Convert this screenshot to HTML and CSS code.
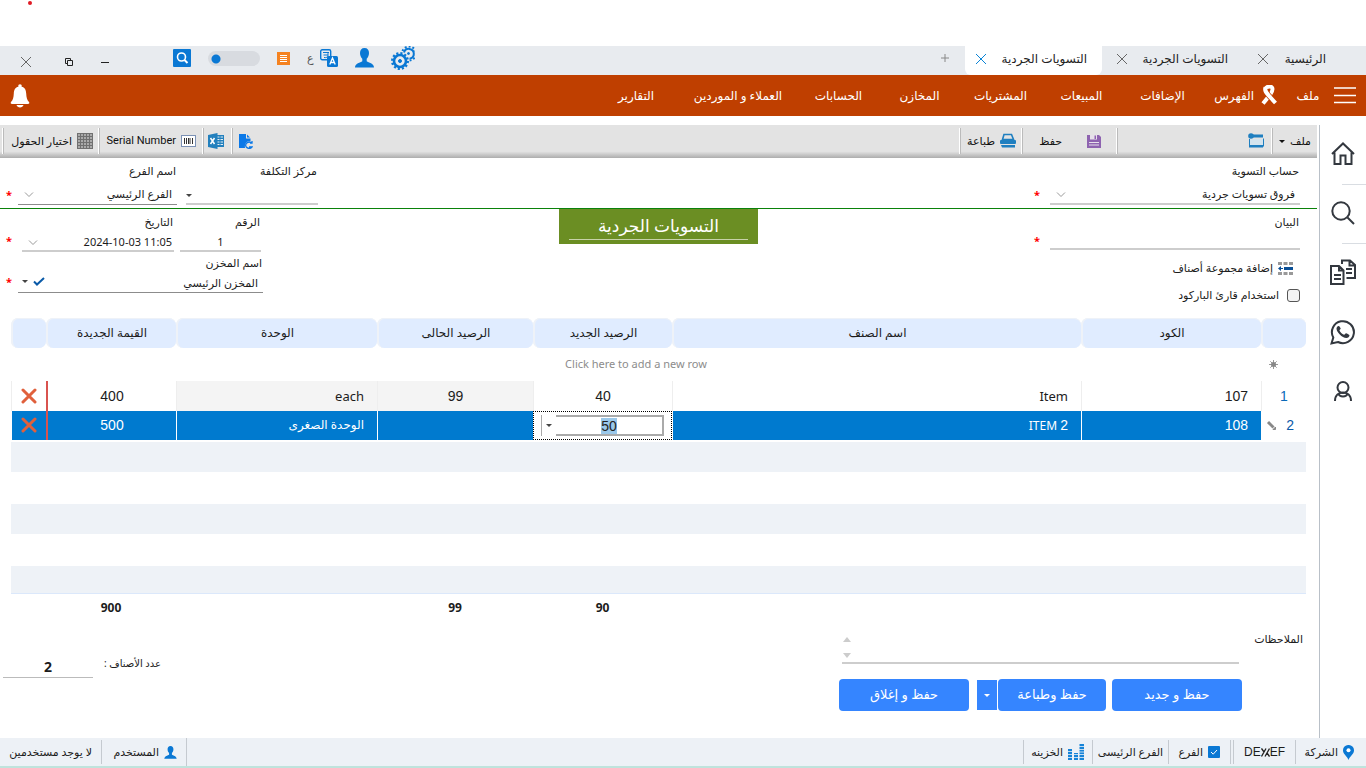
FILE: index.html
```html
<!DOCTYPE html>
<html lang="ar" dir="rtl">
<head>
<meta charset="utf-8">
<meta name="viewport" content="width=device-width, initial-scale=1">
<title>التسويات الجردية</title>
<link rel="stylesheet" href="styles.css">
</head>
<body>
<div class="app">
  <div class="top-space"><span class="rec-dot"></span></div>

  <header class="titlebar">
    <div class="tabs">
      <div class="tab tab-home"><span>الرئيسية</span><button class="tab-close" aria-label="إغلاق"><svg width="12" height="12" viewBox="0 0 12 12"><path d="M1 1l10 10M11 1L1 11"/></svg></button></div>
      <div class="tab"><span>التسويات الجردية</span><button class="tab-close" aria-label="إغلاق"><svg width="12" height="12" viewBox="0 0 12 12"><path d="M1 1l10 10M11 1L1 11"/></svg></button></div>
      <div class="tab tab-active"><span>التسويات الجردية</span><button class="tab-close" aria-label="إغلاق"><svg width="12" height="12" viewBox="0 0 12 12"><path d="M1 1l10 10M11 1L1 11"/></svg></button></div>
      <button class="tab-add" aria-label="تبويب جديد"><svg width="8" height="8" viewBox="0 0 8 8"><path d="M4 0v8M0 4h8"/></svg></button>
    </div>
    <div class="window-tools" dir="ltr">
      <button class="win-btn" aria-label="إغلاق النافذة"><svg width="12" height="12" viewBox="0 0 12 12"><path d="M1 1l10 10M11 1L1 11" stroke="#666" fill="none"/></svg></button>
      <button class="win-btn win-restore" aria-label="استعادة"><svg width="10" height="10" viewBox="0 0 10 10"><path d="M3.500 3.500h5v5h-5zM3.500 6.500h-2v-5h5v2" stroke="#222" fill="none"/></svg></button>
      <button class="win-btn win-min" aria-label="تصغير"><svg width="10" height="10" viewBox="0 0 10 10"><path d="M1 5.500h8" stroke="#222" fill="none"/></svg></button>
      <div class="quick">
        <button aria-label="بحث"><svg width="18" height="18" viewBox="0 0 18 18"><rect width="18" height="18" rx="1" fill="#0a78d4"/><circle cx="8.500" cy="8" r="4" fill="none" stroke="#fff" stroke-width="1.600"/><path d="M11.500 11l3 3" stroke="#fff" stroke-width="2"/></svg></button>
        <input class="toggle" type="checkbox" aria-label="الوضع">
        <button aria-label="قائمة"><svg width="13" height="13" viewBox="0 0 13 13"><rect width="13" height="13" fill="#f58220"/><path d="M3 3.500h7M3 5.500h7M3 7.500h7M3 9.500h7" stroke="#fff"/></svg></button>
        <button class="lang" aria-label="اللغة"><span>ع</span><svg width="18" height="18" viewBox="0 0 18 18"><rect x=".7" y=".7" width="10" height="10" rx="1.500" fill="#e8ebef" stroke="#0a78d4" stroke-width="1.400"/><path d="M3 3.500h6M3.500 6h4.500M8 4v3c0 1-2 2-4 1.500" stroke="#0a78d4" fill="none"/><rect x="7" y="7" width="11" height="11" rx="1.500" fill="#0a78d4"/><path d="M9.800 15.500l2.700-6.500 2.700 6.500M10.800 13.500h3.500" stroke="#fff" stroke-width="1.300" fill="none"/></svg></button>
        <button aria-label="المستخدم"><svg width="19" height="20" viewBox="0 0 19 20"><path d="M9.500 0C6.500 0 5 2 5 5c0 2.500 1 4.500 2.300 5.800v2.500C5.500 14.500 0 15.500 0 19.500h19c0-4-5.500-5-7.300-6.200v-2.500C13 9.500 14 7.500 14 5c0-3-1.500-5-4.500-5z" fill="#0a78d4"/></svg></button>
        <button aria-label="الإعدادات"><svg width="24" height="24" viewBox="0 0 24 24" fill="none" stroke="#0a78d4"><circle cx="9" cy="15" r="6" stroke-width="2.600"/><circle cx="9" cy="15" r="7.800" stroke-width="2.400" stroke-dasharray="2.100 2"/><circle cx="9" cy="15" r="1.500" fill="#0a78d4"/><path d="M13 6.500a5 5 0 1 1 5.500 6.300" stroke-width="2"/><path d="M11.500 5a7 7 0 1 1 7 9.500" stroke-width="2" stroke-dasharray="1.900 2"/><circle cx="17.500" cy="7.500" r="1" fill="#0a78d4"/></svg></button>
      </div>
    </div>
  </header>

  <nav class="menubar">
    <button class="burger" aria-label="القائمة"><svg width="22" height="17" viewBox="0 0 22 17"><path d="M0 1h22M0 8.500h22M0 15.500h22" stroke="#fff" stroke-width="1.700"/></svg></button>
    <a href="#">ملف</a>
    <a href="#" class="index-link"><svg width="18" height="21" viewBox="0 0 18 21"><path d="M5.500 4.500C6 1.500 9 1 11.500 2c2 1.500.5 5-1.500 8L3 18.500" fill="none" stroke="#fff" stroke-width="4"/><path d="M6 3.500c-1 3 1.500 5.500 4.500 9l4.500 5" fill="none" stroke="#bf3f00" stroke-width="5.500"/><path d="M5.500 2.500c-1.500 4 2 6.500 5 10l5 5.500" fill="none" stroke="#fff" stroke-width="4"/></svg><span>الفهرس</span></a>
    <a href="#">الإضافات</a>
    <a href="#">المبيعات</a>
    <a href="#">المشتريات</a>
    <a href="#">المخازن</a>
    <a href="#">الحسابات</a>
    <a href="#">العملاء و الموردين</a>
    <a href="#">التقارير</a>
    <button class="bell" aria-label="التنبيهات"><svg width="20" height="24" viewBox="0 0 20 24" fill="#fff"><circle cx="10" cy="2" r="1.800"/><path d="M10 2.500c-4.500 0-6 3-6.200 7-.2 4-.8 6.500-2.800 8.500-.8 1.200 0 2 1 2h16c1 0 1.800-.8 1-2-2-2-2.600-4.500-2.800-8.500-.2-4-1.700-7-6.200-7z"/><path d="M6.500 21h7c-.5 1.600-1.800 2.500-3.500 2.500S7 22.600 6.500 21z"/></svg></button>
  </nav>

  <div class="workspace">
    <aside class="sidebar">
      <button aria-label="الرئيسية"><svg width="24" height="24" viewBox="0 0 24 24"><path d="M1 12L12 1.500 23 12M3.500 10.500V22h6v-8.500h5V22h6V10.500"/></svg></button>
      <button class="ruled" aria-label="بحث"><svg width="24" height="24" viewBox="0 0 24 24"><circle cx="10" cy="10" r="8.700"/><path d="M16.500 16.500L23 23"/></svg></button>
      <button class="ruled" aria-label="مستندات"><svg width="26" height="26" viewBox="0 0 26 26"><path d="M1 7h8l4.500 4.500V25H1zM9 7v4.500h4.500M4 16h7M4 20h7M12 5V1.500h8L25 6v13h-8.500M19.500 2v4.500H25M16 10h6M16 14h6"/></svg></button>
      <button class="low" aria-label="واتساب"><svg width="26" height="26" viewBox="0 0 26 26"><path d="M1.500 24.500l1.800-6A11 11 0 1 1 8 23z"/><path class="solid" d="M9 7c-1-.5-2.500 1-2.500 2.500C6.500 13 12 19 16.500 19c1.500 0 3-1.300 3-2.700 0-.5-3-2-3.500-2-.7 0-1.300 1.700-2 1.500-2-.7-3.800-2.600-4.500-4.300-.2-.6 1.300-1.300 1.200-2C10.600 9 9.500 7.200 9 7z"/></svg></button>
      <button class="low" aria-label="الحساب"><svg width="20" height="22" viewBox="0 0 20 22"><circle cx="10" cy="7.500" r="5.500"/><path d="M2 21c0-6 4-8.500 8-8.500s8 2.500 8 8.500M5.500 13.500c1 4 8 4 9 0"/></svg></button>
    </aside>

    <main class="content">
      <div class="toolbar">
        <button class="tool tool-file">ملف <i class="caret"></i></button>
        <div class="tool-slot"><button class="tool" aria-label="نافذة"><svg width="16" height="16" viewBox="0 0 16 16"><path d="M5 1.500h10v3H5zM1 6h1v7.500H1zM15 5.500h1v8h-1zM1 12h14v2.500H1z" fill="#1f7fc0"/><path d="M2 6h13v6H2z" fill="#d4e4ee"/><circle cx="3" cy="3" r="2.800" fill="#1f7fc0"/></svg></button></div>
        <button class="tool tool-save"><svg width="14" height="15" viewBox="0 0 14 15"><path d="M0 1h12l2 2v11H0z" fill="#8e63b0"/><path d="M3 1h7v4.500H3zM2 8h10v1H2zM2 10.500h10v1H2z" fill="#e6e0ea"/><path d="M7.500 1.500h1.500V5H7.500z" fill="#8e63b0"/></svg><span>حفظ</span></button>
        <button class="tool tool-print"><svg width="16" height="16" viewBox="0 0 16 16"><path d="M4 1.500h7.500l2 5h-11z" fill="#e3e3e3" stroke="#1f7fc0" stroke-width="1.600"/><rect y="7" width="16" height="4" rx="1" fill="#1f7fc0"/><path d="M1 12h14v2.500H2z" fill="#1f7fc0"/></svg><span>طباعة</span></button>
        <div class="tool-fill"></div>
        <button class="tool tool-icon" aria-label="تحديث"><svg width="14" height="15" viewBox="0 0 14 15"><path d="M0 0h7v4.500h4.500V7C7 7 5.500 10 6 14H0z" fill="#0a78e8"/><path d="M8 .5L11 3.500H8z" fill="#0a78e8"/><path d="M12.500 9A3.500 3 0 1 0 13 13h-3M11 9h2V7" fill="none" stroke="#0a78e8" stroke-width="1.300"/></svg></button>
        <button class="tool tool-icon" aria-label="Excel"><svg width="16" height="16" viewBox="0 0 16 16"><rect x="8" y="2" width="8" height="12" fill="#2380bd"/><path d="M9 4h6M9 6.500h6M9 9h6M9 11.500h6" stroke="#e4eef5" stroke-width="1.200"/><path d="M12 2v12" stroke="#2380bd"/><path d="M0 2l9.500-2v16L0 14z" fill="#2380bd"/><path d="M2.500 5l4 6M6.500 5l-4 6" stroke="#fff" stroke-width="1.500"/></svg></button>
        <button class="tool tool-serial"><svg width="15" height="12" viewBox="0 0 15 12"><rect x=".5" y=".5" width="14" height="11" fill="#fff" stroke="#7b91b5"/><path d="M3.500 3v6M5.500 3v6M7.500 3v6M9 3v6M11.500 3v6" stroke="#333"/></svg><span dir="ltr">Serial Number</span></button>
        <button class="tool tool-fields"><svg width="16" height="16" viewBox="0 0 16 16"><rect width="16" height="16" fill="#aaa"/><path d="M.5 0v16M3.500 0v16M6.500 0v16M9.500 0v16M12.500 0v16M15.500 0v16M0 .5h16M0 3.500h16M0 6.500h16M0 9.500h16M0 12.500h16M0 15.500h16" stroke="#707070"/></svg><span>اختيار الحقول</span></button>
      </div>

      <section class="form-top">
        <div class="field-wrap">
          <div class="field field-wide"><label for="acc">حساب التسوية</label><div class="control"><select id="acc"><option>فروق تسويات جردية</option></select><svg class="chev" width="10" height="6" viewBox="0 0 10 6"><path d="M1 .5l4 4 4-4"/></svg></div></div>
          <span class="req">*</span>
        </div>
        <div class="field-wrap">
          <div class="field field-cost"><label for="cost">مركز التكلفة</label><div class="control"><select id="cost"><option></option></select><i class="caret chev"></i></div></div>
          <div class="field field-branch"><label for="branch">اسم الفرع</label><div class="control dark"><select id="branch"><option>الفرع الرئيسي</option></select><svg class="chev" width="10" height="6" viewBox="0 0 10 6"><path d="M1 .5l4 4 4-4"/></svg></div></div>
          <span class="req">*</span>
        </div>
      </section>

      <section class="form-body">
        <div class="side-right">
          <div class="field-wrap">
            <div class="field field-wide"><label for="desc">البيان</label><div class="control"><input id="desc" type="text"></div></div>
            <span class="req">*</span>
          </div>
          <button class="add-group"><svg width="15" height="13" viewBox="0 0 15 13"><path d="M0 1.500h4M5.500 1.500h4M11 1.500h4M0 11.500h4M5.500 11.500h4M11 11.500h4" stroke="#999" stroke-width="3"/><path d="M6 6.500h9" stroke="#0a4f96" stroke-width="3"/><path d="M0 6.500l3-2.500v2h2v1H3v2z" fill="#0a4f96"/></svg><span>إضافة مجموعة أصناف</span></button>
          <label class="barcode"><input type="checkbox"><span>استخدام قارئ الباركود</span></label>
        </div>
        <h1 class="form-title"><span>التسويات الجردية</span></h1>
        <div class="side-left">
          <div class="field-wrap">
            <div class="field field-number"><label for="num">الرقم</label><div class="control"><input id="num" type="text" value="1"></div></div>
            <div class="field field-date"><label for="date">التاريخ</label><div class="control"><input id="date" type="text" dir="ltr" value="2024-10-03 11:05"><svg class="chev" width="10" height="6" viewBox="0 0 10 6"><path d="M1 .5l4 4 4-4"/></svg></div></div>
            <span class="req">*</span>
          </div>
          <div class="field-wrap store-row">
            <div class="field field-store"><label for="store">اسم المخزن</label><div class="control dark"><select id="store"><option>المخزن الرئيسي</option></select><span class="chev store-marks"><svg width="12" height="9" viewBox="0 0 12 9"><path d="M1 4.500l3 3L11 1" fill="none" stroke="#0a5aa8" stroke-width="2"/></svg><i class="caret"></i></span></div></div>
            <span class="req">*</span>
          </div>
        </div>
      </section>

      <section class="grid-area">
        <table class="items">
          <colgroup><col class="c-no"><col class="c-code"><col><col class="c-new"><col class="c-now"><col class="c-unit"><col class="c-value"><col class="c-del"></colgroup>
          <thead><tr><th></th><th>الكود</th><th>اسم الصنف</th><th>الرصيد الجديد</th><th>الرصيد الحالى</th><th>الوحدة</th><th>القيمة الجديدة</th><th></th></tr></thead>
          <tbody>
            <tr class="new-row"><td class="star"><svg width="9" height="9" viewBox="0 0 9 9"><path d="M4.500 0v9M0 4.500h9M1.300 1.300l6.400 6.400M7.700 1.300L1.300 7.700" stroke="#999"/><circle cx="4.500" cy="4.500" r="2.500" fill="#888"/></svg></td><td colspan="7" dir="ltr" class="hint">Click here to add a new row</td></tr>
            <tr class="row"><td class="no">1</td><td class="end num">107</td><td class="end">Item</td><td class="num">40</td><td class="num muted">99</td><td class="end muted">each</td><td class="num value">400</td><td class="del"><button aria-label="حذف"><svg width="16" height="16" viewBox="0 0 16 16"><path d="M2 2l12 12M14 2L2 14"/></svg></button></td></tr>
            <tr class="row selected"><td class="no"><span class="row-no"><span>2</span><svg width="10" height="10" viewBox="0 0 10 10"><path d="M2 2l5.500 5.500" stroke="#888" stroke-width="3"/><path d="M7 9.500h2.500V7z" stroke="#888" fill="#888"/></svg></span></td><td class="end num">108</td><td class="end">ITEM <span class="num">2</span></td><td class="editing"><div class="editor"><input id="qty" type="text" value="50" aria-label="الرصيد الجديد"><button aria-label="حاسبة"><i class="caret"></i></button></div></td><td></td><td class="end">الوحدة الصغرى</td><td class="num value">500</td><td class="del"><button aria-label="حذف"><svg width="16" height="16" viewBox="0 0 16 16"><path d="M2 2l12 12M14 2L2 14"/></svg></button></td></tr>
            <tr class="blank first"><td colspan="8"></td></tr>
            <tr class="blank"><td colspan="8"></td></tr>
            <tr class="blank"><td colspan="8"></td></tr>
            <tr class="blank"><td colspan="8"></td></tr>
            <tr class="blank last"><td colspan="8"></td></tr>
          </tbody>
          <tfoot><tr><td></td><td></td><td></td><td>90</td><td>99</td><td></td><td>900</td><td></td></tr></tfoot>
        </table>
      </section>

      <section class="bottom">
        <div class="notes-side">
          <div class="notes-row"><label for="notes">الملاحظات</label><div class="notes"><textarea id="notes" rows="1"></textarea><div class="spin"><i class="up"></i><i class="down"></i></div></div></div>
          <div class="actions">
            <button class="primary">حفظ و جديد</button>
            <div class="split"><button class="primary">حفظ وطباعة</button><button class="primary split-arrow" aria-label="خيارات"><i class="caret"></i></button></div>
            <button class="primary close-btn">حفظ و إغلاق</button>
          </div>
        </div>
        <div class="count"><span>عدد الأصناف :</span><output>2</output></div>
      </section>
    </main>
  </div>

  <footer class="status">
    <div class="st st-company"><svg width="11" height="15" viewBox="0 0 11 15"><path d="M5.500 0A5.300 5.300 0 0 0 0 5.500C0 9 4 11 5.500 15 7 11 11 9 11 5.500A5.300 5.300 0 0 0 5.500 0z" fill="#0a78d4"/><circle cx="5.500" cy="5.300" r="2" fill="#fff"/></svg><span>الشركة</span></div>
    <div class="st st-brand" dir="ltr"><span>DE</span><svg width="9" height="9" viewBox="0 0 9 9"><path d="M5 .5l-4.500 8M8.500.500l-4.500 8M.5.500L3 4M6 5l2.500 3.500" stroke="#222" stroke-width="1.300" fill="none"/></svg><span>EF</span></div>
    <div class="st st-branch"><svg width="12" height="12" viewBox="0 0 12 12"><rect width="12" height="12" rx="1" fill="#0a78d4"/><path d="M3 6l2.200 2.200L9 4" fill="none" stroke="#fff"/></svg><span>الفرع</span></div>
    <div class="st st-branch-name"><span>الفرع الرئيسى</span></div>
    <div class="st st-safe"><svg width="16" height="16" viewBox="0 0 16 16"><path d="M0 5h4v11H0zM6 9h4v7H6zM11.500 0h4.500v16h-4.500z" fill="#1683d8"/><path d="M0 7.500h4M0 10.500h16M0 13.500h16M11 2.500h5M11 5.500h5M11 8h5" stroke="#edf1f6" stroke-width=".8"/></svg><span>الخزينه</span></div>
    <div class="st-fill"></div>
    <div class="st st-user"><svg width="13" height="13" viewBox="0 0 19 20"><path d="M9.500 0C6.500 0 5 2 5 5c0 2.500 1 4.500 2.300 5.800v2.500C5.500 14.500 0 15.500 0 19.500h19c0-4-5.500-5-7.300-6.200v-2.500C13 9.500 14 7.500 14 5c0-3-1.500-5-4.500-5z" fill="#0a78d4"/></svg><span>المستخدم</span></div>
    <div class="st st-none"><span>لا يوجد مستخدمين</span></div>
  </footer>
</div>
<script src="app.js"></script>
</body>
</html>
```
FILE: styles.css
```css
* { box-sizing: border-box; }
body { margin: 0; background: #fff; color: #1c1c1c; font: 11px/16px "Noto Sans", "DejaVu Sans", sans-serif; }
button { border: 0; padding: 0; margin: 0; background: none; color: inherit; font: inherit; cursor: pointer; }
input, select, textarea { font: inherit; color: inherit; margin: 0; }
a { color: inherit; text-decoration: none; }
svg { display: block; flex: none; }
.app { display: flex; flex-direction: column; min-height: 100vh; }
.caret { display: inline-block; border: 3px solid transparent; border-top-color: currentColor; border-bottom: 0; }

.top-space { height: 46px; display: flex; justify-content: flex-end; padding: 1px 28px; }
.rec-dot { width: 4px; height: 4px; border-radius: 50%; background: #e01b24; }

/* Tabs and window controls */
.titlebar { height: 29px; display: flex; justify-content: space-between; background: #e8ebef; }
.tabs { display: flex; font-size: 12px; }
.tab { width: 141px; display: flex; align-items: center; justify-content: space-between; padding: 0 15px 3px 14px; color: #222; white-space: nowrap; }
.tab-home { width: 123px; padding-right: 40px; }
.tab-active { width: 137px; padding-left: 10px; background: #fff; border-radius: 0 0 6px 6px; }
.tab-close { color: #666; }
.tab-active .tab-close { color: #0a84d6; }
.tab-close svg, .tab-add svg { stroke: currentColor; fill: none; }
.tab-add { width: 40px; display: flex; align-items: center; justify-content: center; padding-bottom: 5px; color: #888; }
.window-tools { display: flex; align-items: center; padding-left: 6px; }
.win-btn { width: 40px; height: 29px; display: flex; align-items: center; justify-content: center; padding-top: 2px; }
.win-restore { width: 46px; }
.win-min { width: 26px; }
.quick { display: flex; align-items: center; gap: 17px; padding: 0 0 5px 55px; }
.toggle { appearance: none; width: 52px; height: 15px; border-radius: 8px; background: radial-gradient(circle at 8px 8px, #0a78d4 4px, #d8dbe0 5px); }
.lang { display: flex; align-items: center; gap: 6px; color: #555; }

/* Main menu */
.menubar { height: 41px; display: grid; grid-template-columns: 42px 32px 89px repeat(5, 81px) 120px 84px 1fr; align-items: center; background: #bf3f00; color: #fff; font-size: 12px; text-align: center; white-space: nowrap; }
.burger { display: flex; justify-content: center; }
.index-link { display: flex; align-items: center; gap: 6px; padding-right: 14px; }
.bell { justify-self: end; margin-left: 10px; }

.workspace { flex: 1; display: flex; }
.sidebar { width: 47px; margin-top: 9px; border-left: 1px solid #b9c0c8; }
.sidebar button { width: 100%; height: 59px; display: flex; align-items: center; justify-content: center; padding-bottom: 2px; }
.sidebar .low { padding-bottom: 0; }
.sidebar .ruled { border-top: 1px solid #d9dde2; border-image: linear-gradient(to left, #d9dde2 24px, transparent 24px) 1; }
.sidebar svg { fill: none; stroke: #33383f; stroke-width: 2; }
.sidebar .solid { fill: #33383f; stroke: none; }
.content { flex: 1; min-width: 0; margin: 9px 2px 0 0; display: flex; flex-direction: column; }

/* Toolbar */
.toolbar { display: flex; height: 33px; background: linear-gradient(#e3e3e3 80%, #adadad); color: #111; }
.tool { display: flex; align-items: center; gap: 5px; white-space: nowrap; }
.toolbar > * { border-left: 1px solid #bbb; box-shadow: -1px 0 #fff; height: 26px; margin-top: 3px; }
.toolbar > .tool-fields { margin-left: 3px; }
.tool-file { width: 45px; padding-right: 6px; }
.tool-slot { width: 155px; padding-right: 8px; display: flex; }
.tool-save { width: 95px; padding-right: 16px; gap: 25px; }
.tool-print { width: 62px; padding-right: 6px; }
.toolbar > .tool-fill { flex: 1; border: 0; box-shadow: none; }
.tool-icon { width: 29px; padding-right: 8px; }
.tool-serial { width: 104px; padding-right: 7px; font-family: Roboto, "DejaVu Sans", sans-serif; }
.tool-fields { width: 96px; padding-right: 6px; }

/* Form fields */
.form-top { height: 50px; display: flex; justify-content: space-between; padding: 5px 17px 0 6px; }
.field-wrap { display: flex; align-items: flex-start; }
.field { display: flex; flex-direction: column; font-size: 11px; }
.field label { padding-right: 1px; line-height: 16px; }
.control { position: relative; height: 26px; border-bottom: 2px solid #cdcdcd; }
.control.dark { border-bottom: 1px solid #8c8c8c; }
.control input, .control select { appearance: none; width: 100%; height: 100%; border: 0; outline: 0; padding: 5px 5px 0 20px; background: none; line-height: 16px; }
.chev { position: absolute; left: 6px; top: 13px; pointer-events: none; fill: none; stroke: #999; }
.caret.chev { left: 0; top: 15px; color: #444; }
.store-marks { display: flex; align-items: center; gap: 5px; left: 4px; color: #444; }
.field-wide { width: 250px; }
.field-cost { width: 132px; margin-left: 9px; }
.field-branch { width: 159px; }
.req { width: 12px; padding-top: 24px; text-align: left; font-weight: 700; color: #f00; }
.field-wide + .req { width: 16px; }

.form-body { min-height: 110px; display: grid; grid-template-columns: 1fr 199px 1fr; border-top: 1px solid #0a820a; }
.side-right { padding: 5px 17px 0 0; }
.side-right .control { height: 20px; }
.side-right .req, .side-left .req { padding-top: 19px; }
.side-left { padding: 5px 0 0 6px; display: flex; flex-direction: column; align-items: flex-end; }
.side-left .control { height: 22px; }
.side-left .chev { top: 10px; }
.field-number { width: 81px; margin-left: 6px; }
.side-left input, .side-left select { padding-top: 2px; }
.field-number input { text-align: center; padding: 2px 0 0; }
.field-date { width: 152px; margin-left: 4px; }
.field-date input { text-align: right; padding-right: 2px; }
.store-row { margin-top: 3px; }
.field-store { width: 245px; }
.side-left .store-marks { top: 6px; }
.add-group { display: flex; align-items: center; gap: 5px; margin: 10px 7px 0 0; }
.barcode { display: flex; align-items: center; gap: 8px; margin-top: 11px; }
.barcode input { appearance: none; width: 13px; height: 13px; border: 1px solid #555; border-radius: 3px; background: #f3f3f3; }
.form-title { margin: 0; height: 35px; padding: 3px 10px; background: #6b8e23; color: #fff; font-size: 17px; font-weight: 400; line-height: 27px; text-align: center; }
.form-title span { display: block; border-bottom: 1px solid #c7d2a8; }

/* Items table */
.grid-area { padding: 0 11px; }
.items { width: 100%; table-layout: fixed; border-collapse: separate; border-spacing: 0; }
.c-no { width: 45px; } .c-code { width: 180px; } .c-new { width: 139px; } .c-now { width: 156px; } .c-unit { width: 201px; } .c-value { width: 130px; } .c-del { width: 35px; }
.items th { height: 30px; padding: 0 0 2px; border: 1px solid #eef2f8; border-width: 1px 0 0 2px; background: #e0ecff; border-radius: 7px; font-size: 12px; font-weight: 400; }
.items thead { background: #eef2f8; }
.items td { padding: 0; text-align: center; }
.new-row td { height: 33px; }
.new-row .hint { color: #8c8c8c; padding-bottom: 2px; }
.star svg { margin-right: 28px; }
.row td { height: 30px; border-left: 1px solid #eee; font-size: 13px; }
.row.selected td { height: 29px; padding-bottom: 1px; background: #007acf; color: #fff; border-left-color: #fff; font-size: 12px; }
.row .num, .row.selected .num, .row .no, .row.selected .no { font-family: "Liberation Sans", sans-serif; font-size: 14px; }
.row.selected .no { background: #fff; color: #0a5aa8; }
.row .no { color: #0a6ab8; }
.row-no { display: flex; align-items: center; gap: 10px; padding-right: 12px; }
.row .end { direction: ltr; text-align: right; padding-right: 12px; }
.row .muted { background: #f4f4f4; }
.items .row .value { border-left: 2px solid #d9534f; }
.del button { display: block; margin: 0 9px 0 0; }
.del svg { stroke: #e0603c; stroke-width: 3; stroke-linecap: round; }
.row.selected .editing { padding: 0; background: #fff; border: 1px dotted #000; }
.editor { display: flex; height: 21px; margin: 0 7px; border-left: 1px solid #aaa; }
.editor input { flex: 1; min-width: 0; border: 2px solid #aaa; border-left: 0; outline: 0; padding: 0; text-align: center; color: #222; font: 14px/16px "Liberation Sans", sans-serif; }
.editor input::selection { background: #9ac8ea; color: #222; }
.editor button { width: 14px; color: #444; display: flex; align-items: center; justify-content: center; }
.blank td { height: 32px; }
.blank:nth-child(even) td { height: 30px; background: #eef2f7; }
.blank.first td { border-top: 2px solid #fff; height: 32px; }
.blank.last td { height: 28px; border-bottom: 1px solid #dbe8fb; }
tfoot td { height: 28px; font-size: 12px; font-weight: 700; }

/* Notes and actions */
.bottom { display: flex; justify-content: space-between; padding: 7px 14px 0 3px; }
.notes-row { display: flex; align-items: flex-start; gap: 14px; line-height: 20px; }
.notes-row label { width: 50px; white-space: nowrap; }
.notes { width: 397px; display: flex; height: 35px; border-bottom: 2px solid #cdcdcd; }
.notes textarea { flex: 1; border: 0; outline: 0; resize: none; background: none; }
.spin { width: 10px; display: flex; flex-direction: column; justify-content: space-between; align-items: center; padding: 8px 0 4px; }
.spin i { border: 4px solid transparent; }
.spin .up { border-bottom: 5px solid #ccc; border-top: 0; }
.spin .down { border-top: 5px solid #ccc; border-bottom: 0; }
.actions { display: flex; margin: 15px 61px 0 0; gap: 6px; }
.primary { width: 130px; height: 32px; padding-bottom: 2px; border-radius: 4px; background: #3585ff; color: #fff; font-size: 13px; }
.split { display: flex; gap: 1px; align-items: center; }
.split .primary { width: 108px; }
.split .split-arrow { display: flex; align-items: center; justify-content: center; width: 20px; height: 30px; padding: 0; border-radius: 0; }
.close-btn { margin-right: 2px; }
.count { display: flex; align-items: flex-start; gap: 11px; padding-top: 24px; font-size: 10px; line-height: 20px; }
.count output { width: 90px; height: 25px; padding-top: 4px; border-bottom: 1px solid #bbb; text-align: center; font-size: 14px; font-weight: 700; }

/* Status bar */
.status { height: 30px; display: flex; align-items: center; background: #edf1f6; border-bottom: 2px solid #bfe3dc; font-size: 11px; white-space: nowrap; }
.st { height: 24px; display: flex; align-items: center; gap: 5px; border-left: 1px solid #c5cad0; padding-right: 9px; }
.st-company { width: 71px; padding-right: 12px; }
.st-brand { width: 62px; gap: 0; justify-content: center; padding: 0; font: 12px/16px "Liberation Sans", sans-serif; }
.st-branch { width: 63px; padding-right: 10px; border-right: 1px solid #c5cad0; margin-right: 2px; }
.st-branch-name { width: 76px; padding: 0; justify-content: center; }
.st-safe { width: 69px; padding-right: 8px; }
.st-fill { flex: 1; border-left: 1px solid #c5cad0; height: 28px; }
.st-user { width: 85px; padding-right: 9px; }
.st-none { width: 101px; border: 0; }
```
FILE: app.js
```js
const qty = document.getElementById('qty');
qty.focus();
qty.select();
```
